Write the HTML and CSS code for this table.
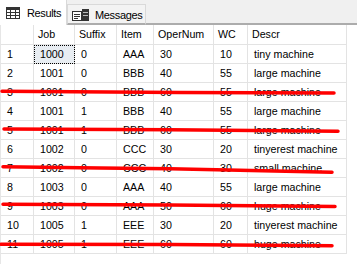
FILE: index.html
```html
<!DOCTYPE html>
<html lang="en">
<head>
  <meta charset="UTF-8" />
  <title>Results</title>
  <link rel="stylesheet" href="styles.css">
</head>
<body>
  <div class="tabs">
    <div class="tab active">
      <svg width="14" height="12" viewBox="0 0 14 12">
        <rect x="0.5" y="0.5" width="13" height="11" fill="#fff" stroke="#333" />
        <rect x="0" y="0" width="14" height="3" fill="#333" />
        <path d="M4.5 3v8M9.5 3v8M0 5.5h14M0 8.5h14" stroke="#333" fill="none" />
      </svg>
      <span>Results</span>
    </div>
    <div class="tab">
      <svg width="18" height="12" viewBox="0 0 18 12">
        <rect x="0.5" y="2.5" width="9" height="9" fill="#fff" stroke="#333" />
        <path d="M2 5.5h6M2 7.5h6M2 9.5h4" stroke="#333" fill="none" />
        <rect x="10" y="0" width="7" height="12" fill="#333" />
        <path d="M11 3.5h5M11 6.5h5" stroke="#bbb" fill="none" />
      </svg>
      <span>Messages</span>
    </div>
    <div class="tab-fill"></div>
  </div>

  <div class="results">
    <div class="row head">
      <div></div><div>Job</div><div>Suffix</div><div>Item</div><div>OperNum</div><div>WC</div><div>Descr</div>
    </div>
    <div class="row"><div>1</div><div class="current">1000</div><div>0</div><div>AAA</div><div>30</div><div>10</div><div>tiny machine</div></div>
    <div class="row"><div>2</div><div>1001</div><div>0</div><div>BBB</div><div>40</div><div>55</div><div>large machine</div></div>
    <div class="row"><div>3</div><div>1001</div><div>0</div><div>BBB</div><div>60</div><div>55</div><div>large machine</div></div>
    <div class="row"><div>4</div><div>1001</div><div>1</div><div>BBB</div><div>40</div><div>55</div><div>large machine</div></div>
    <div class="row"><div>5</div><div>1001</div><div>1</div><div>BBB</div><div>60</div><div>55</div><div>large machine</div></div>
    <div class="row"><div>6</div><div>1002</div><div>0</div><div>CCC</div><div>30</div><div>20</div><div>tinyerest machine</div></div>
    <div class="row"><div>7</div><div>1002</div><div>0</div><div>CCC</div><div>40</div><div>30</div><div>small machine</div></div>
    <div class="row"><div>8</div><div>1003</div><div>0</div><div>AAA</div><div>40</div><div>55</div><div>large machine</div></div>
    <div class="row"><div>9</div><div>1003</div><div>0</div><div>AAA</div><div>50</div><div>60</div><div>huge machine</div></div>
    <div class="row"><div>10</div><div>1005</div><div>1</div><div>EEE</div><div>30</div><div>20</div><div>tinyerest machine</div></div>
    <div class="row"><div>11</div><div>1005</div><div>1</div><div>EEE</div><div>60</div><div>60</div><div>huge machine</div></div>
  </div>

  <!-- red strike marks drawn over the rows -->
  <svg class="marks" width="357" height="264" viewBox="0 0 357 264">
    <g fill="none" stroke="#ff0000" stroke-width="3.5" stroke-linecap="round" stroke-linejoin="round">
      <path d="M2 91.3 L180 92.5 L334 93" />
      <path d="M4 129 L170 129.8 L338 131.3" />
      <path d="M3 166.7 L100 168 L170 168.8 L332 172.2" />
      <path d="M3 204.3 L170 205 L335 206.5" />
      <path d="M1 244.3 L170 244.5 L332 245.7" />
    </g>
  </svg>
</body>
</html>
```

FILE: styles.css
```css
body {
  margin: 0;
  background: #fff;
  font-family: 'Liberation Sans', Arial, sans-serif;
  color: #000;
  position: relative;
  width: 357px;
  height: 264px;
  overflow: hidden;
}

.tabs {
  display: flex;
  height: 25px;
  background: #f0f0f0;
  font-size: 11px;
  letter-spacing: -0.35px;
}

.tab {
  display: flex;
  align-items: center;
  box-sizing: border-box;
}

.tab.active {
  width: 67px;
  background: #fff;
  border-right: 1px solid #d9d9d9;
  padding-left: 6px;
  gap: 7px;
}

.tab:not(.active) {
  width: 79px;
  margin-top: 4px;
  padding: 2px 0 0 4px;
  gap: 5px;
  background: #f3f3f3;
  border: 1px solid #d9d9d9;
  border-bottom: 2px solid #acacac;
}

.tab-fill {
  flex: 1;
  border-bottom: 2px solid #acacac;
}

.results {
  border-left: 1px solid #e6e6e6;
  height: 239px;
  font-size: 10.67px;
}

.row {
  display: grid;
  grid-template-columns: 33px 41px 42px 37px 60px 34px 99px;
  height: 19px;
}

.row div {
  box-sizing: border-box;
  border-right: 1px solid #e3e3e3;
  border-bottom: 1px solid #e3e3e3;
  line-height: 18px;
  padding-left: 6px;
  white-space: nowrap;
  overflow: hidden;
}

.row.head {
  height: 20px;
}

.row.head div {
  line-height: 19px;
  padding-left: 4px;
}

.row div:first-child {
  padding-left: 6px;
}

.current {
  background: #e8edf2;
  outline: 1px dotted #000;
  outline-offset: -1px;
}

.marks {
  position: absolute;
  top: 0;
  left: 0;
  pointer-events: none;
}
```
